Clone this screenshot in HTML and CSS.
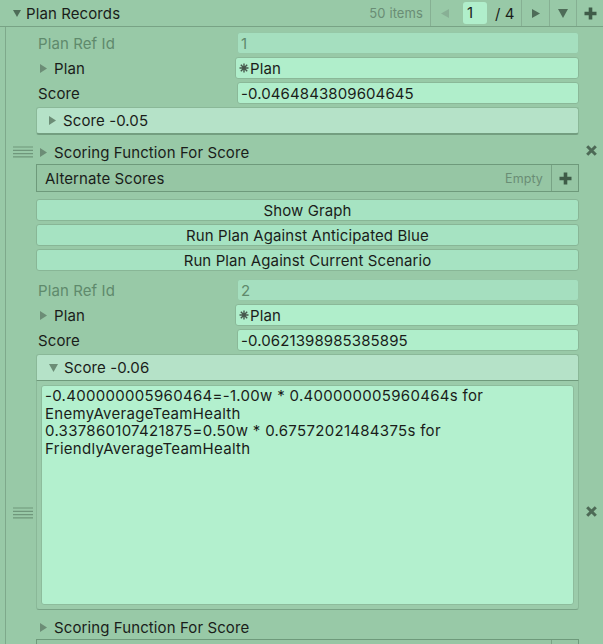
FILE: index.html
```html
<!DOCTYPE html>
<html>
<head>
<meta charset="utf-8">
<link rel="stylesheet" href="styles.css">
</head>
<body>
<div class="header">
  <svg class="header-tri" width="8" height="7" viewBox="0 0 8 7"><polygon points="0,0 8,0 4,7" fill="#4e6c58"/></svg>
  <span class="title">Plan Records</span>
  <span class="count">50 items</span>
  <div class="pager">
    <span class="pager-prev"><svg width="8" height="9" viewBox="0 0 8 9"><polygon points="8,0 0,4.5 8,9" fill="#88b095"/></svg></span>
    <span class="pager-input">1</span>
    <span class="pager-total">/ 4</span>
  </div>
  <span class="hbtn hbtn-next"><svg width="8" height="9" viewBox="0 0 8 9"><polygon points="0,0 8,4.5 0,9" fill="#4e6c58"/></svg></span>
  <span class="hbtn hbtn-menu"><svg width="10" height="9" viewBox="0 0 10 9"><polygon points="0,0 10,0 5,9" fill="#4e6c58"/></svg></span>
  <span class="hbtn hbtn-add"><svg width="13" height="13" viewBox="0 0 13 13"><path d="M6.5 0.5V12.5M0.5 6.5H12.5" stroke="#3f5c48" stroke-width="3.6"/></svg></span>
</div>

<div class="list">
  <div class="element">
    <div class="handle"><svg width="20" height="12" viewBox="0 0 20 12"><path d="M0 1H20M0 4.3H20M0 7.6H20M0 10.9H20" stroke="#6f977b" stroke-width="1.2"/></svg></div>
    <div class="content">
      <div class="prop">
        <div class="label disabled">Plan Ref Id</div>
        <div class="field disabled">1</div>
      </div>
      <div class="prop">
        <div class="label"><svg class="tri" width="7" height="9" viewBox="0 0 7 9"><polygon points="0,0 7,4.5 0,9" fill="#6c8d76"/></svg>Plan</div>
        <div class="field obj"><svg class="obj-icon" width="10" height="10" viewBox="0 0 10 10"><path d="M5 0.5V9.5M0.5 5H9.5M1.8 1.8L8.2 8.2M8.2 1.8L1.8 8.2" stroke="#46574c" stroke-width="1.4"/></svg>Plan</div>
      </div>
      <div class="prop">
        <div class="label">Score</div>
        <div class="field">-0.0464843809604645</div>
      </div>
      <div class="foldout">
        <svg class="tri" width="7" height="9" viewBox="0 0 7 9"><polygon points="0,0 7,4.5 0,9" fill="#6c8d76"/></svg>Score -0.05
      </div>
      <div class="subprop">
        <svg class="tri" width="7" height="9" viewBox="0 0 7 9"><polygon points="0,0 7,4.5 0,9" fill="#6c8d76"/></svg>Scoring Function For Score
      </div>
      <div class="alt">
        <span class="alt-title">Alternate Scores</span>
        <span class="alt-empty">Empty</span>
        <span class="alt-add"><svg width="13" height="13" viewBox="0 0 13 13"><path d="M6.5 0.5V12.5M0.5 6.5H12.5" stroke="#3f5c48" stroke-width="3.6"/></svg></span>
      </div>
      <div class="buttons">
        <div class="btn">Show Graph</div>
        <div class="btn">Run Plan Against Anticipated Blue</div>
        <div class="btn">Run Plan Against Current Scenario</div>
      </div>
    </div>
    <div class="remove"><svg width="11" height="11" viewBox="0 0 11 11"><path d="M1.2 1.2L9.8 9.8M9.8 1.2L1.2 9.8" stroke="#4d6a56" stroke-width="3"/></svg></div>
  </div>

  <div class="element second">
    <div class="handle"><svg width="20" height="12" viewBox="0 0 20 12"><path d="M0 1H20M0 4.3H20M0 7.6H20M0 10.9H20" stroke="#6f977b" stroke-width="1.2"/></svg></div>
    <div class="content">
      <div class="prop">
        <div class="label disabled">Plan Ref Id</div>
        <div class="field disabled">2</div>
      </div>
      <div class="prop">
        <div class="label"><svg class="tri" width="7" height="9" viewBox="0 0 7 9"><polygon points="0,0 7,4.5 0,9" fill="#6c8d76"/></svg>Plan</div>
        <div class="field obj"><svg class="obj-icon" width="10" height="10" viewBox="0 0 10 10"><path d="M5 0.5V9.5M0.5 5H9.5M1.8 1.8L8.2 8.2M8.2 1.8L1.8 8.2" stroke="#46574c" stroke-width="1.4"/></svg>Plan</div>
      </div>
      <div class="prop">
        <div class="label">Score</div>
        <div class="field">-0.0621398985385895</div>
      </div>
      <div class="foldout-open">
        <div class="fo-head">
          <svg class="tri" width="9" height="8" viewBox="0 0 9 8"><polygon points="0,0 9,0 4.5,8" fill="#6c8d76"/></svg>Score -0.06
        </div>
        <div class="fo-body">
          <div class="textarea">-0.400000005960464=-1.00w * 0.400000005960464s for<br>EnemyAverageTeamHealth<br>0.337860107421875=0.50w * 0.67572021484375s for<br>FriendlyAverageTeamHealth</div>
        </div>
      </div>
      <div class="subprop">
        <svg class="tri" width="7" height="9" viewBox="0 0 7 9"><polygon points="0,0 7,4.5 0,9" fill="#6c8d76"/></svg>Scoring Function For Score
      </div>
      <div class="alt">
        <span class="alt-title">Alternate Scores</span>
        <span class="alt-empty">Empty</span>
        <span class="alt-add"><svg width="13" height="13" viewBox="0 0 13 13"><path d="M6.5 0.5V12.5M0.5 6.5H12.5" stroke="#3f5c48" stroke-width="3.6"/></svg></span>
      </div>
      <div class="buttons">
        <div class="btn">Show Graph</div>
        <div class="btn">Run Plan Against Anticipated Blue</div>
        <div class="btn">Run Plan Against Current Scenario</div>
      </div>
    </div>
    <div class="remove"><svg width="11" height="11" viewBox="0 0 11 11"><path d="M1.2 1.2L9.8 9.8M9.8 1.2L1.2 9.8" stroke="#4d6a56" stroke-width="3"/></svg></div>
  </div>
</div>
</body>
</html>
```
FILE: styles.css
```css
* { box-sizing: border-box; }
html, body { margin: 0; padding: 0; }
body {
  background: #98c9a7;
  font-family: Inter, "Noto Sans", sans-serif;
  font-size: 15px;
  letter-spacing: 0.1px;
  color: #1a1d1a;
  width: 603px;
  height: 644px;
  overflow: hidden;
}
svg { display: block; flex: none; }

/* header */
.header {
  display: flex;
  align-items: center;
  height: 27px;
  border-bottom: 1px solid #78a385;
}
.header-tri { margin-left: 13px; margin-right: 5px; }
.title { flex: 1; white-space: nowrap; }
.count { color: #6a8d75; margin-right: 7px; font-size: 13px; }
.pager {
  display: flex;
  align-items: center;
  width: 92px;
  height: 26px;
  border-left: 1px solid #86b093;
  border-right: 1px solid #86b093;
}
.pager-prev { width: 28px; display: flex; justify-content: center; }
.pager-input {
  width: 24px;
  height: 22px;
  margin-left: 4px;
  background: #b0eecb;
  border-radius: 3px;
  padding-left: 4px;
  line-height: 22px;
}
.pager-total { margin-left: 8px; }
.hbtn {
  height: 26px;
  display: flex;
  align-items: center;
  justify-content: center;
  border-right: 1px solid #86b093;
}
.hbtn-next { width: 28px; }
.hbtn-menu { width: 27px; }
.hbtn-add { width: 26px; border-right: 0; }

/* list */
.list {
  margin-left: 5px;
  border-left: 1px solid #7ea98b;
  padding-top: 1px;
}
.element {
  display: flex;
  align-items: center;
  padding: 4px 0 4px;
}
.handle { width: 30px; padding-left: 7px; }
.content { width: 543px; flex: none; }
.remove { width: 24px; display: flex; justify-content: center; margin-bottom: 3px; }

.prop {
  display: flex;
  align-items: center;
  height: 22px;
  margin-bottom: 3px;
}
.label {
  width: 201px;
  flex: none;
  padding-left: 2px;
  display: flex;
  align-items: center;
}
.label .tri { margin-left: 2px; margin-right: 7px; }
.label.disabled { color: #5f8a6c; }
.field {
  flex: 1;
  height: 22px;
  background: #b0eecb;
  border: 1px solid #8ab898;
  border-radius: 3px;
  padding-left: 3px;
  display: flex;
  align-items: center;
  white-space: nowrap;
}
.field.disabled { background: #a5dfbf; border-color: #96c8a7; color: #5f8a6c; }
.field.obj { margin-left: -2px; }
.obj-icon { margin-right: 1px; }

.foldout {
  height: 28px;
  background: #b5e2c8;
  border: 1px solid #8ab898;
  border-bottom: 2px solid #739e80;
  border-radius: 3px;
  display: flex;
  align-items: center;
  padding-left: 12px;
}
.foldout .tri { margin-right: 7px; }

.subprop {
  height: 24px;
  margin-top: 5px;
  display: flex;
  align-items: center;
  padding-left: 4px;
}
.subprop .tri { margin-right: 7px; }

.alt {
  height: 28px;
  display: flex;
  align-items: center;
  border: 1px solid #6e9a7b;
  background: #96c6a4;
}
.alt-title { flex: 1; padding-left: 8px; }
.alt-empty { color: #6a8d75; margin-right: 8px; font-size: 12.5px; }
.alt-add {
  width: 27px;
  height: 100%;
  border-left: 1px solid #78a385;
  display: flex;
  align-items: center;
  justify-content: center;
}

.buttons { padding-top: 4px; }
.btn {
  height: 22px;
  margin-top: 3px;
  background: #a6e3c2;
  border: 1px solid #88b696;
  border-radius: 3px;
  display: flex;
  align-items: center;
  justify-content: center;
}

.fo-head {
  height: 27px;
  background: #b5e2c8;
  border: 1px solid #8ab898;
  border-bottom: 1px solid #6f9a7c;
  border-radius: 3px 3px 0 0;
  display: flex;
  align-items: center;
  padding-left: 12px;
}
.fo-head .tri { margin-right: 6px; }
.fo-body {
  border: 1px solid #8ab898;
  border-top: 0;
  border-bottom-color: #79a487;
  border-radius: 0 0 3px 3px;
  padding: 4px;
  background: #9bcbaa;
}
.textarea {
  height: 220px;
  background: #b3f0ce;
  border: 1px solid #8dbc9c;
  border-radius: 3px;
  padding: 1px 3px;
  line-height: 17.7px;
  letter-spacing: 0.3px;
}
```
